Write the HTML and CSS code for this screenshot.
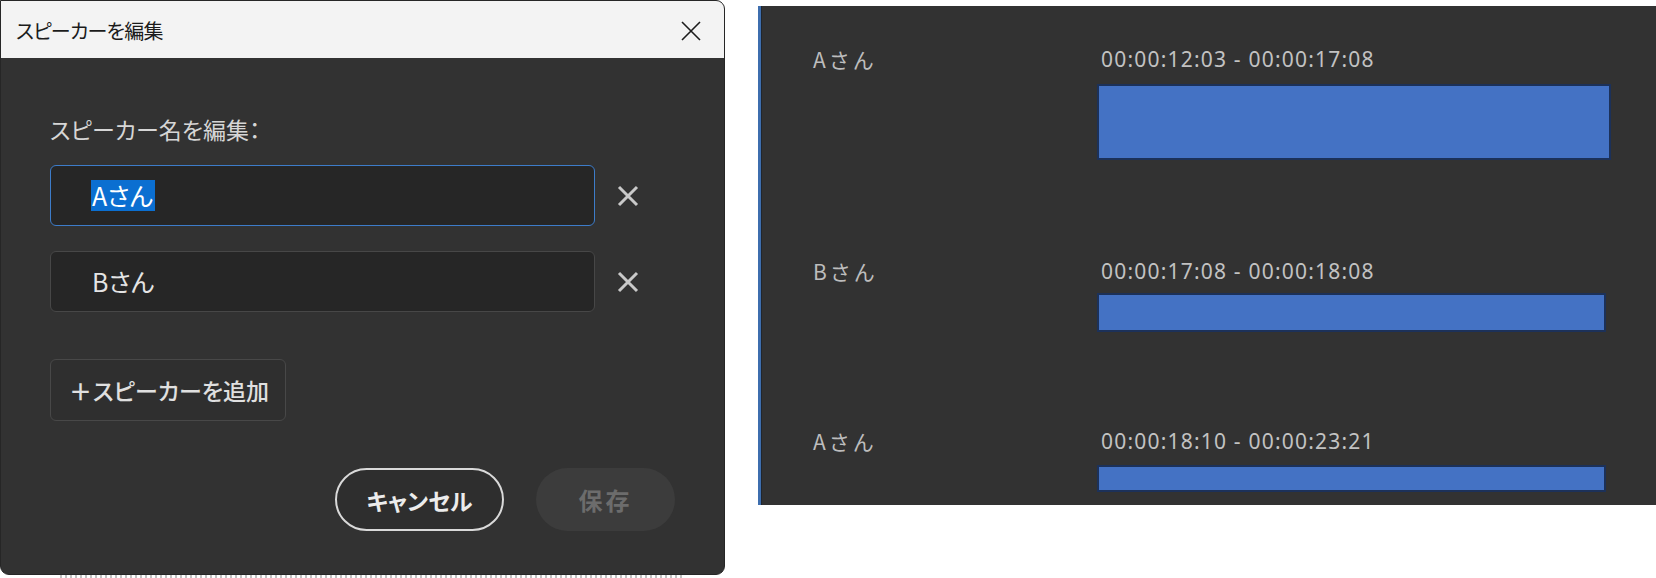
FILE: index.html
```html
<!DOCTYPE html>
<html lang="ja">
<head>
<meta charset="utf-8">
<title>スピーカーを編集</title>
<link rel="stylesheet" href="styles.css">
</head>
<body>
<div class="page">
  <div class="dialog-wrap">
    <div class="dialog">
      <div class="titlebar">
        <span class="title">スピーカーを編集</span>
        <svg class="close" width="22" height="22" viewBox="0 0 22 22"><path d="M2 2L20 20M20 2L2 20" stroke="#1c1c1c" stroke-width="1.6" fill="none"/></svg>
      </div>
      <div class="body">
        <div class="label">スピーカー名を編集：</div>
        <div class="field-row">
          <div class="field focus"><span class="sel">Aさん</span></div>
          <svg class="del" width="24" height="24" viewBox="0 0 24 24"><path d="M3 3L21 21M21 3L3 21" stroke="#c9c9c9" stroke-width="3" fill="none"/></svg>
        </div>
        <div class="field-row">
          <div class="field"><span class="val">Bさん</span></div>
          <svg class="del" width="24" height="24" viewBox="0 0 24 24"><path d="M3 3L21 21M21 3L3 21" stroke="#c9c9c9" stroke-width="3" fill="none"/></svg>
        </div>
        <div class="add-row">
          <button class="add"><span class="plus">＋</span>スピーカーを追加</button>
        </div>
        <div class="actions">
          <button class="cancel">キャンセル</button>
          <button class="save">保存</button>
        </div>
      </div>
    </div>
    <div class="ticks"></div>
  </div>

  <div class="panel">
    <div class="row r1">
      <div class="name">Aさん</div>
      <div class="seg">
        <div class="tc">00:00:12:03 - 00:00:17:08</div>
        <div class="bar b1"></div>
      </div>
    </div>
    <div class="row r2">
      <div class="name">Bさん</div>
      <div class="seg">
        <div class="tc">00:00:17:08 - 00:00:18:08</div>
        <div class="bar b2"></div>
      </div>
    </div>
    <div class="row r3">
      <div class="name">Aさん</div>
      <div class="seg">
        <div class="tc">00:00:18:10 - 00:00:23:21</div>
        <div class="bar b3"></div>
      </div>
    </div>
  </div>
</div>
</body>
</html>
```

FILE: styles.css
```css
* { box-sizing: border-box; }
html, body { margin: 0; padding: 0; background: #ffffff; }
body {
  width: 1656px;
  height: 578px;
  overflow: hidden;
  font-family: "Noto Sans CJK JP", "Noto Sans", sans-serif;
}
.page {
  display: flex;
  align-items: flex-start;
}
.dialog-wrap {
  width: 725px;
  display: flex;
  flex-direction: column;
}
.dialog {
  width: 725px;
  height: 575px;
  background: #323232;
  border: 1px solid #262626;
  border-radius: 0 9px 9px 9px;
  overflow: hidden;
  display: flex;
  flex-direction: column;
}
.ticks {
  height: 3px;
  margin: 0 40px 0 60px;
  background: repeating-linear-gradient(90deg, #9a9a9a 0 2px, transparent 2px 5px);
  opacity: 0.6;
}
.titlebar {
  height: 57px;
  background: #f3f3f3;
  display: flex;
  align-items: center;
  justify-content: space-between;
  padding: 2px 22px 0 15px;
  flex: none;
}
.title {
  font-size: 20px;
  color: #1b1b1b;
  font-feature-settings: "palt" 1;
  letter-spacing: -0.8px;
}
.body {
  padding: 56px 49px 0 49px;
  display: flex;
  flex-direction: column;
  font-feature-settings: "palt" 1;
}
.label {
  font-size: 23px;
  line-height: 30px;
  color: #d6d6d6;
  margin-bottom: 21px;
}
.field-row {
  display: flex;
  align-items: center;
  gap: 21px;
  margin-bottom: 25px;
}
.field {
  width: 545px;
  height: 61px;
  background: #262626;
  border: 1.5px solid #474747;
  border-radius: 6px;
  display: flex;
  align-items: center;
  padding-left: 40px;
  font-size: 25px;
  color: #e4e4e4;
}
.field.focus {
  border-color: #3d7cc9;
}
.sel {
  background: #0b6fd1;
  color: #ffffff;
  line-height: 31px;
  height: 31px;
  padding: 0 2px 0 1px;
}
.val {
  line-height: 31px;
  padding: 0 1px;
}
.add-row {
  margin-top: 22px;
  display: flex;
}
.add {
  height: 62px;
  width: 236px;
  background: #2f2f2f;
  border: 1.5px solid #484848;
  border-radius: 6px;
  color: #e0e0e0;
  font-family: inherit;
  font-size: 23px;
  font-feature-settings: "palt" 1;
  padding: 0 0 0 18px;
  display: flex;
  align-items: center;
  font-weight: 500;
}
.plus {
  font-weight: 700;
  margin-right: 1px;
}
.actions {
  margin-top: 47px;
  display: flex;
  justify-content: flex-end;
  gap: 32px;
}
.cancel, .save {
  height: 63px;
  border-radius: 32px;
  font-family: inherit;
  font-weight: 700;
  font-feature-settings: "palt" 1;
}
.cancel {
  width: 169px;
  font-size: 23px;
  background: #2e2e2e;
  border: 2.5px solid #d9d9d9;
  color: #ececec;
}
.save {
  width: 139px;
  font-size: 24px;
  letter-spacing: 3px;
  padding-left: 6px;
  background: #3c3c3c;
  border: none;
  color: #6c6c6c;
}

.panel {
  margin-left: 33px;
  margin-top: 6px;
  flex: 1;
  height: 499px;
  background: #323232;
  border-left: 3px solid #3e6eae;
  box-shadow: inset 1px 0 0 #20262e;
  display: flex;
  flex-direction: column;
}
.row {
  display: grid;
  grid-template-columns: 336px 1fr;
  align-items: start;
}
.r1 { margin-top: 39px; }
.r2 { margin-top: 97px; }
.r3 { margin-top: 95px; }
.name {
  padding-left: 52px;
  font-size: 21px;
  line-height: 28px;
  color: #bdbdbd;
  letter-spacing: 3px;
}
.seg {
  display: flex;
  flex-direction: column;
  gap: 8px;
}
.r1 .seg { gap: 11px; }
.r3 .seg { gap: 10px; }
.tc {
  padding-left: 4px;
  font-family: "Noto Sans", sans-serif;
  font-size: 21px;
  line-height: 28px;
  color: #c2c2c2;
  letter-spacing: 1.2px;
}
.bar {
  background: #4472c4;
  border: 2px solid #1c3159;
}
.b1 { width: 514px; height: 76px; }
.b2 { width: 509px; height: 39px; }
.b3 { width: 509px; height: 27px; }
```
